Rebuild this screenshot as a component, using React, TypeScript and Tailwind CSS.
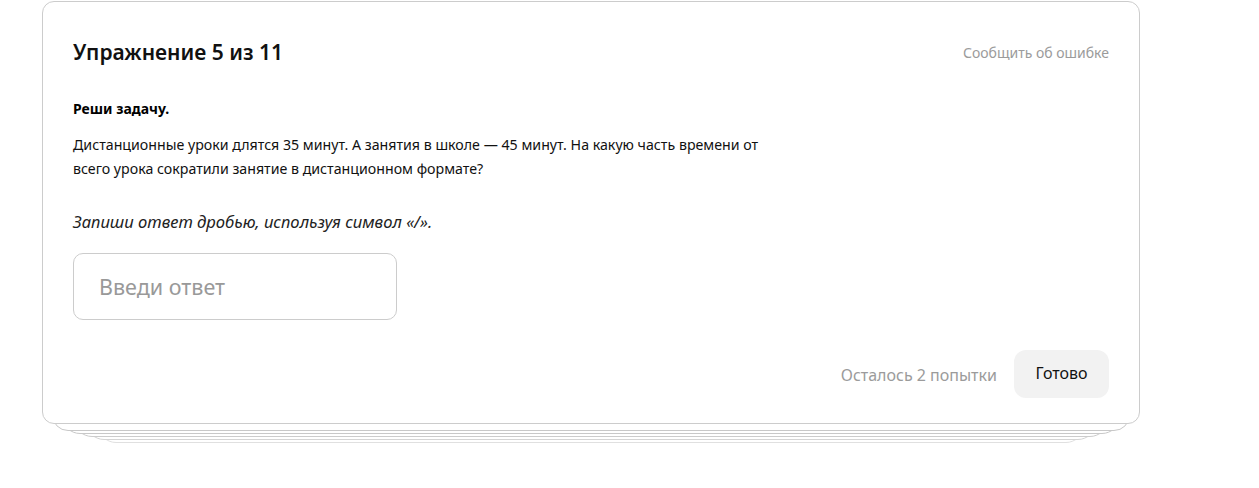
import React from 'react';

export default function App() {
  return (
    <div className="w-[1259px] h-[488px] bg-white" style={{ fontFamily: '"Noto Sans", "Open Sans", sans-serif' }}>
      <div className="relative ml-[42px] mt-[1px] w-[1098px]">
        {/* stacked cards behind */}
        <div className="absolute left-[56px] right-[56px] top-[20px] h-[422px] rounded-[18px] border border-[#e0e0e0] bg-white" />
        <div className="absolute left-[44px] right-[44px] top-[20px] h-[419px] rounded-[18px] border border-[#d4d4d4] bg-white" />
        <div className="absolute left-[32px] right-[32px] top-[20px] h-[416px] rounded-[18px] border border-[#cccccc] bg-white" />
        <div className="absolute left-[20px] right-[20px] top-[20px] h-[413px] rounded-[18px] border border-[#c8c8c8] bg-white" />
        <div className="absolute left-[10px] right-[10px] top-[20px] h-[410px] rounded-[16px] border border-[#c8c8c8] bg-white" />

        <div className="relative h-[423px] rounded-[12px] border border-[#cccccc] bg-white px-[30px] pt-[34px] pb-[25px] flex flex-col">
          <div className="flex items-start justify-between">
            <h1 className="text-[21px] leading-[32px] font-semibold text-[#111]">Упражнение 5 из 11</h1>
            <button className="text-[14px] leading-[32px] text-[#9b9b9b] mt-[1px]">Сообщить об ошибке</button>
          </div>

          <p className="mt-[30px] text-[14px] leading-[20px] font-bold text-black">Реши задачу.</p>

          <p className="mt-[14px] w-[700px] text-[14.2px] leading-[24px] text-[#111]">
            Дистанционные уроки длятся 35 минут. А занятия в школе — 45 минут. На какую часть времени от всего урока сократили занятие в дистанционном формате?
          </p>

          <p className="mt-[29px] text-[16.6px] leading-[24px] italic text-[#222]">Запиши ответ дробью, используя символ «/».</p>

          <input
            className="mt-[19px] w-[324px] h-[67px] rounded-[10px] border border-[#cccccc] px-[25px] text-[21.5px] text-[#111] placeholder:text-[#999] outline-none"
            placeholder="Введи ответ"
          />

          <div className="mt-auto flex items-center justify-end gap-[17px]">
            <span className="text-[16px] text-[#9b9b9b] mt-[2px]">Осталось 2 попытки</span>
            <button className="h-[48px] w-[95px] rounded-[12px] bg-[#f2f2f2] pb-[3px] text-[16px] text-[#111]">Готово</button>
          </div>
        </div>
      </div>
    </div>
  );
}
